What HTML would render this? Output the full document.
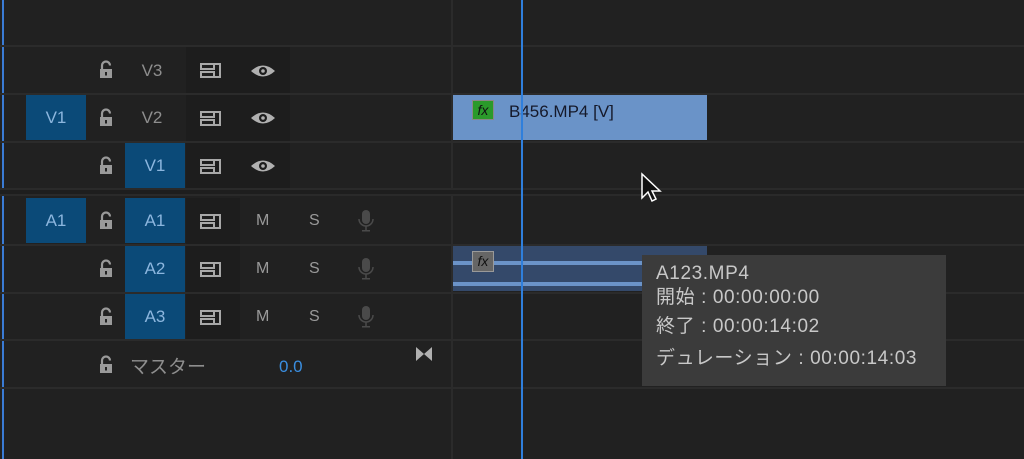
<!DOCTYPE html>
<html><head><meta charset="utf-8"><style>
*{margin:0;padding:0;box-sizing:border-box}
body{width:1024px;height:459px;background:#212121;position:relative;overflow:hidden;font-family:"Liberation Sans","Noto Sans CJK JP",sans-serif}
.a{position:absolute}
.hl{position:absolute;left:0;width:1024px;height:2px;background:#2b2b2b}
.blue{position:absolute;background:#0b4a78;color:#8cb6de;font-size:17px;display:flex;align-items:center;justify-content:center}
.lbl{position:absolute;color:#8e8e8e;font-size:17px;width:60px;text-align:center}
.dk{position:absolute;background:#1d1d1d}
.ms{position:absolute;color:#9a9a9a;font-size:15px}
</style></head><body>
<div class="a" style="left:2px;top:0;width:2px;height:459px;background:#3a7bd5"></div>
<div class="a" style="left:451px;top:0;width:2px;height:459px;background:#2b2b2b"></div>
<div class="dk" style="left:186px;top:47px;width:104px;height:141px"></div>
<div class="dk" style="left:186px;top:198px;width:54px;height:142px"></div>
<div class="hl" style="top:45px"></div>
<div class="hl" style="top:93px"></div>
<div class="hl" style="top:141px"></div>
<div class="hl" style="top:188px;height:8px;background:#2a2a2a"></div>
<div class="a" style="left:0;top:190px;width:1024px;height:4px;background:#1e1e1e"></div>
<div class="hl" style="top:244px"></div>
<div class="hl" style="top:292px"></div>
<div class="hl" style="top:339px"></div>
<div class="hl" style="top:387px"></div>

<div class="blue" style="left:26px;top:95px;width:60px;height:45px">V1</div>
<div class="blue" style="left:125px;top:143px;width:60px;height:45px">V1</div>
<div class="blue" style="left:26px;top:198px;width:60px;height:45px">A1</div>
<div class="blue" style="left:125px;top:198px;width:60px;height:45px">A1</div>
<div class="blue" style="left:125px;top:246px;width:60px;height:46px">A2</div>
<div class="blue" style="left:125px;top:294px;width:60px;height:45px">A3</div>
<div class="lbl" style="left:122px;top:61px">V3</div>
<div class="lbl" style="left:122px;top:108px">V2</div>

<svg class="a" style="left:0;top:0" width="452" height="459">
<defs>
<g id="lk" fill="#9a9a9a"><path d="M-6 -1h12v9h-12z"/><path d="M-4 -1v-3.5a4 4 0 0 1 8 0" fill="none" stroke="#9a9a9a" stroke-width="2.2"/><rect x="-1" y="2" width="2" height="3.5" fill="#222"/></g>
<g id="tg" fill="none" stroke="#a8a8a8" stroke-width="2"><rect x="-10" y="-6" width="13" height="5"/><rect x="-10" y="2" width="13" height="5"/><path d="M3 -6h6v13h-6"/></g>
<g id="ey"><path d="M-12 0Q0 -11 12 0Q0 11 -12 0z" fill="#b0b0b0"/><circle r="4" fill="#1c1c1c"/><circle r="1.8" fill="#b0b0b0"/></g>
<g id="mc" fill="#4a4a4a"><rect x="-4" y="-10" width="8" height="14" rx="4"/><path d="M-7 -1a7 7 0 0 0 14 0" fill="none" stroke="#4a4a4a" stroke-width="1.5"/><rect x="-0.75" y="6" width="1.5" height="4"/><rect x="-4" y="10" width="8" height="1.5"/></g>
</defs>
<use href="#lk" x="106" y="70"/><use href="#lk" x="106" y="118"/><use href="#lk" x="106" y="166"/>
<use href="#lk" x="106" y="221"/><use href="#lk" x="106" y="269"/><use href="#lk" x="106" y="317"/><use href="#lk" x="106" y="365"/>
<use href="#tg" x="211" y="70"/><use href="#tg" x="211" y="118"/><use href="#tg" x="211" y="166"/>
<use href="#tg" x="211" y="221"/><use href="#tg" x="211" y="269"/><use href="#tg" x="211" y="317"/>
<use href="#ey" x="263" y="71"/><use href="#ey" x="263" y="118"/><use href="#ey" x="263" y="166"/>
<use href="#mc" x="366" y="220"/><use href="#mc" x="366" y="268"/><use href="#mc" x="366" y="316"/>
<path d="M416 347l8 7 8 -7v14l-8 -7 -8 7z" fill="#b0b0b0"/>
</svg>
<div class="ms" style="left:256px;top:212px;font-size:16px">M</div><div class="ms" style="left:309px;top:212px;font-size:16px">S</div>
<div class="ms" style="left:256px;top:260px;font-size:16px">M</div><div class="ms" style="left:309px;top:260px;font-size:16px">S</div>
<div class="ms" style="left:256px;top:308px;font-size:16px">M</div><div class="ms" style="left:309px;top:308px;font-size:16px">S</div>
<div class="a" style="left:130px;top:352px;color:#8e8e8e;font-size:19px">マスター</div>
<div class="a" style="left:279px;top:357px;color:#3a8ee0;font-size:17px">0.0</div>

<div class="a" style="left:453px;top:95px;width:254px;height:45px;background:#6a93c8"></div>
<div class="a" style="left:472px;top:100px;width:22px;height:20px;background:#2a9a2a;border:1px solid #888;color:#111;font-style:italic;font-size:14px;text-align:center;line-height:18px">fx</div>
<div class="a" style="left:509px;top:102px;color:#15192a;font-size:17px">B456.MP4 [V]</div>
<div class="a" style="left:453px;top:246px;width:254px;height:45px;background:#34496a"></div>
<div class="a" style="left:453px;top:261px;width:254px;height:4px;background:#6b93c8"></div>
<div class="a" style="left:453px;top:282px;width:254px;height:4px;background:#6b93c8"></div>
<div class="a" style="left:472px;top:251px;width:22px;height:21px;background:#666;border:1px solid #999;color:#111;font-style:italic;font-size:14px;text-align:center;line-height:19px">fx</div>
<div class="a" style="left:521px;top:0;width:2px;height:459px;background:#2f7fdc"></div>

<div class="a" style="left:642px;top:255px;width:304px;height:131px;background:#3b3b3b;color:#c8c8c8;font-size:19px;padding:8px 0 0 14px;line-height:32px;letter-spacing:0.6px;white-space:nowrap">
<div style="line-height:22px">A123.MP4</div>
<div style="line-height:26px">開始 : 00:00:00:00</div>
<div>終了 : 00:00:14:02</div>
<div>デュレーション : 00:00:14:03</div>
</div>
<svg class="a" style="left:640px;top:172px" width="24" height="36"><path d="M2 2v24l6-6 4 9 4-2-4-8h8z" fill="#111" stroke="#fff" stroke-width="1.5"/></svg>
</body></html>
